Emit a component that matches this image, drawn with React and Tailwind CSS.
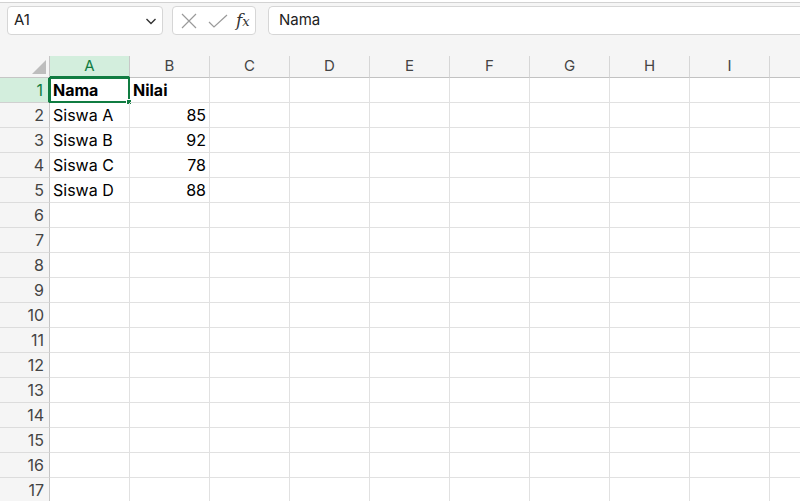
import React from "react";

const cols = ["A", "B", "C", "D", "E", "F", "G", "H", "I", ""];

const data = {
  1: { A: "Nama", B: "Nilai" },
  2: { A: "Siswa A", B: "85" },
  3: { A: "Siswa B", B: "92" },
  4: { A: "Siswa C", B: "78" },
  5: { A: "Siswa D", B: "88" },
};

const rows = Array.from({ length: 17 }, (_, i) => i + 1);

function Toolbar() {
  return (
    <div className="h-[54px] bg-[#f5f5f5] border-t border-[#d2d2d2] mt-[2px] flex items-start pt-[3px] pl-[7px] gap-[9px]">
      <div className="w-[156px] h-[29px] bg-white border border-[#d6d6d6] rounded-[4px] flex items-center justify-between pl-[6px] pr-[4px]">
        <span className="text-[15px] text-[#222]">A1</span>
        <svg width="14" height="14" viewBox="0 0 14 14" fill="none" stroke="#333" strokeWidth="1.4">
          <path d="M2.5 5 L7 9.5 L11.5 5" />
        </svg>
      </div>
      <div className="w-[84px] h-[29px] bg-white border border-[#d6d6d6] rounded-[4px] flex items-center pl-[7px] gap-[10px]">
        <svg width="18" height="18" viewBox="0 0 18 18" fill="none" stroke="#9a9a9a" strokeWidth="1.2">
          <path d="M2 2 L16 16 M16 2 L2 16" />
        </svg>
        <svg width="20" height="18" viewBox="0 0 20 18" fill="none" stroke="#9a9a9a" strokeWidth="1.2">
          <path d="M1 10 L6 15 L19 3" />
        </svg>
        <span className="text-[17px] italic text-[#333] leading-none font-['DejaVu_Serif',serif] -ml-[2px]">
          f<span className="text-[13px]">x</span>
        </span>
      </div>
      <div className="flex-1 h-[29px] bg-white border border-[#d6d6d6] border-r-0 rounded-l-[5px] flex items-center pl-[10px] ml-[3px]">
        <span className="text-[15px] text-[#222]">Nama</span>
      </div>
    </div>
  );
}

function HeaderRow() {
  return (
    <div className="flex h-[22px]">
      <div className="w-[50px] shrink-0 bg-[#f5f5f5] border-b border-r border-[#c6c6c6] flex items-end justify-end pr-[2px] pb-[2px]">
        <svg width="16" height="16" viewBox="0 0 16 16">
          <path d="M15 1 L15 15 L1 15 Z" fill="#bdbdbd" />
        </svg>
      </div>
      {cols.map((c, i) => {
        const sel = c === "A";
        return (
          <div
            key={i}
            className={
              sel
                ? "w-[80px] shrink-0 bg-[#d3eedd] border-b-2 border-[#107c41] border-r border-r-[#c8c8c8] flex items-center justify-center text-[15px] text-[#107c41]"
                : "w-[80px] shrink-0 bg-[#f5f5f5] border-b border-r border-[#d6d6d6] border-b-[#c2c2c2] flex items-center justify-center text-[15px] text-[#444]"
            }
          >
            {c}
          </div>
        );
      })}
    </div>
  );
}

function GridRow({ r }) {
  const sel = r === 1;
  return (
    <div className="flex h-[25px]">
      <div
        className={
          sel
            ? "w-[50px] shrink-0 bg-[#d3eedd] border-r-2 border-[#107c41] border-b border-b-[#d0d0d0] flex items-center justify-end pr-[5px] text-[16px] text-[#107c41]"
            : "w-[50px] shrink-0 bg-[#f5f5f5] border-r border-[#c6c6c6] border-b border-b-[#dcdcdc] flex items-center justify-end pr-[5px] text-[16px] text-[#444]"
        }
      >
        {r}
      </div>
      {cols.map((c, i) => {
        const v = data[r] && data[r][c];
        const isNum = v && /^\d+$/.test(v);
        const active = sel && c === "A";
        return (
          <div
            key={i}
            className="relative w-[80px] shrink-0 border-r border-b border-[#e1e1e1] flex items-center"
          >
            <span
              className={
                (isNum ? "w-full text-right pr-[3px] " : "pl-[3px] ") +
                (sel ? "font-bold " : "") +
                "text-[16px] text-black whitespace-nowrap"
              }
            >
              {v}
            </span>
            {active && (
              <div className="absolute -left-[1px] -top-[1px] w-[81px] h-[26px] border-2 border-[#107c41]">
                <div className="absolute -right-[4px] -bottom-[4px] w-[6px] h-[6px] bg-[#107c41] border border-white" />
              </div>
            )}
          </div>
        );
      })}
    </div>
  );
}

export default function App() {
  return (
    <div className="w-[800px] h-[501px] overflow-hidden bg-white font-['Inter','Liberation_Sans',sans-serif]">
      <Toolbar />
      <HeaderRow />
      {rows.map((r) => (
        <GridRow key={r} r={r} />
      ))}
    </div>
  );
}
